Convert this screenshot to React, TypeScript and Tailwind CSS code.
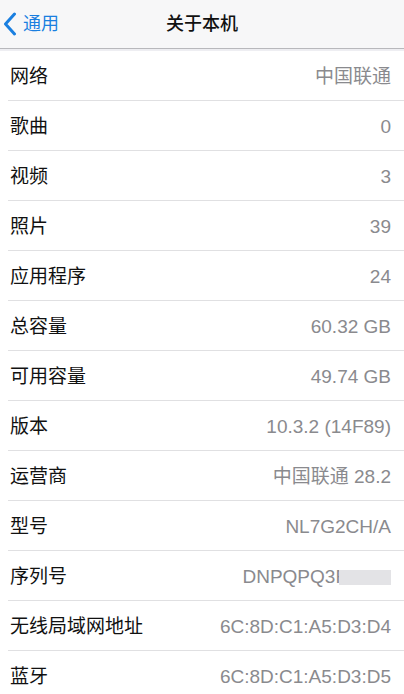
const rows: { label: string; value: string; masked?: boolean }[] = [
  { label: "网络", value: "中国联通" },
  { label: "歌曲", value: "0" },
  { label: "视频", value: "3" },
  { label: "照片", value: "39" },
  { label: "应用程序", value: "24" },
  { label: "总容量", value: "60.32 GB" },
  { label: "可用容量", value: "49.74 GB" },
  { label: "版本", value: "10.3.2 (14F89)" },
  { label: "运营商", value: "中国联通 28.2" },
  { label: "型号", value: "NL7G2CH/A" },
  { label: "序列号", value: "DNPQPQ3F", masked: true },
  { label: "无线局域网地址", value: "6C:8D:C1:A5:D3:D4" },
  { label: "蓝牙", value: "6C:8D:C1:A5:D3:D5" },
];

const font = {
  fontFamily:
    '"Liberation Sans", "Noto Sans CJK SC", "Noto Sans", sans-serif',
};

export default function App() {
  return (
    <div className="h-[694px] w-[404px] overflow-hidden bg-white" style={font}>
      <header className="relative flex h-[49px] items-center justify-center border-b border-[#b8b8bc] bg-[#f7f7f8]">
        <div className="absolute left-0 top-0 flex h-full items-center pl-[3px] text-[#1a7fe0]">
          <svg width="14" height="24" viewBox="0 0 14 24" fill="none">
            <path
              d="M11.5 2 L2.5 12 L11.5 22"
              stroke="currentColor"
              strokeWidth="3"
              strokeLinecap="round"
              strokeLinejoin="round"
            />
          </svg>
          <span className="ml-[6px] text-[18px]">通用</span>
        </div>
        <h1 className="text-[18px] font-medium text-[#111]">关于本机</h1>
      </header>
      <div className="h-[2px] bg-[#eeeef2]" />
      <ul>
        {rows.map((r) => (
          <li key={r.label} className="pl-[8px]">
            <div className="flex h-[50px] items-center justify-between border-b border-[#e0e0e2] pl-[2px] pr-[13px] pt-[3px] text-[19px]">
              <span className="text-[#111]">{r.label}</span>
              {r.masked ? (
                <span className="flex items-center text-[#8a8a8e]">
                  <span>{r.value}</span>
                  <span className="ml-[-8px] h-[15px] w-[52px] bg-[#e3e3e6]" />
                </span>
              ) : (
                <span className="text-[#8a8a8e]">{r.value}</span>
              )}
            </div>
          </li>
        ))}
      </ul>
    </div>
  );
}
